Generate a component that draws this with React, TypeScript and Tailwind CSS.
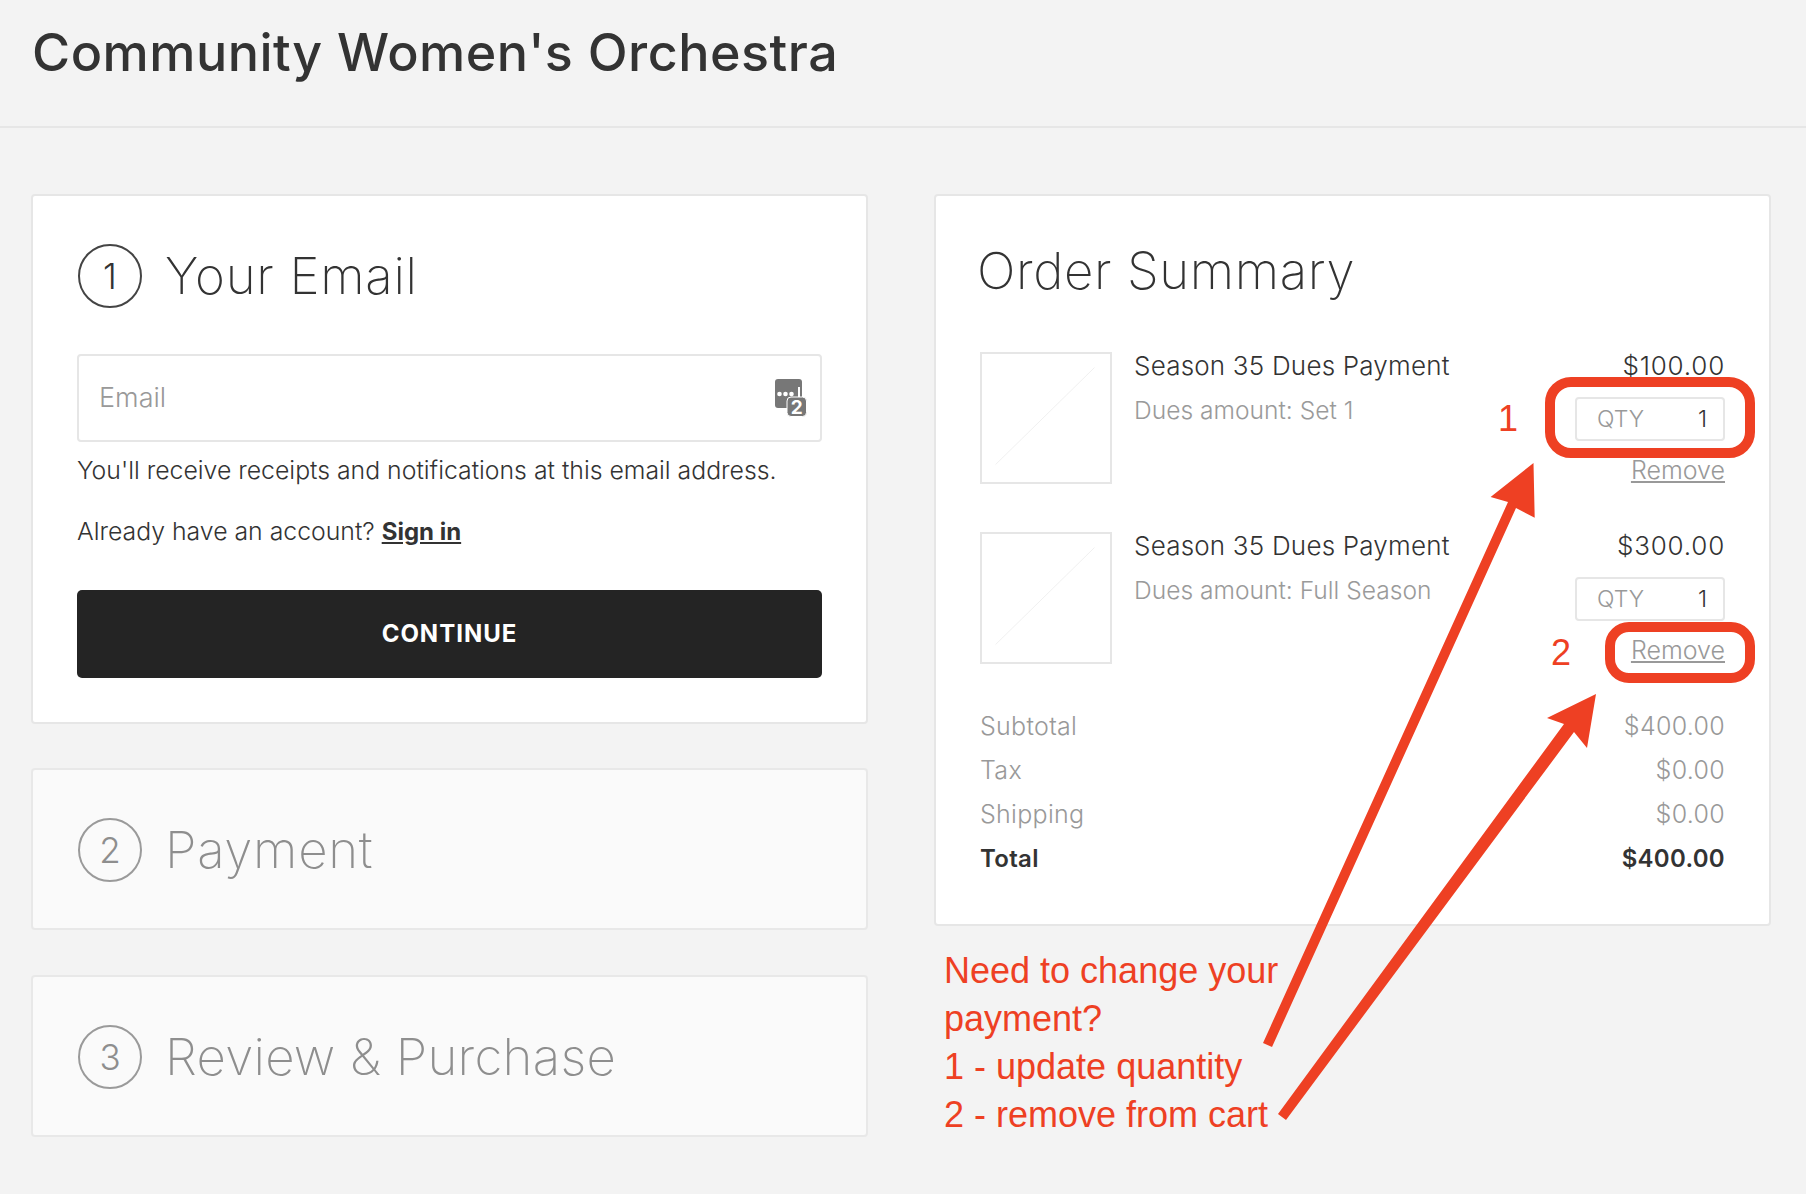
import React from 'react';

const font = "font-['Inter','Liberation_Sans',sans-serif]";

const StepHeading = ({ n, title, muted, tight }: { n: number; title: string; muted?: boolean; tight?: boolean }) => (
  <div className={`flex items-center gap-[23px] pl-px ${muted ? 'text-[#8e8e8e]' : 'text-[#333333]'}`}>
    <div
      className={`flex h-[64px] w-[64px] items-center justify-center rounded-full border-2 text-[35px] font-light ${
        muted ? 'border-[#9a9a9a]' : 'border-[#444444]'
      }`}
    >
      {n}
    </div>
    <h2 className={`text-[51px] font-extralight leading-[64px] ${tight ? 'tracking-[0.25px]' : 'tracking-[0.7px]'}`}>{title}</h2>
  </div>
);

const CollapsedStep = ({ n, title, tight }: { n: number; title: string; tight?: boolean }) => (
  <section className="h-[162px] rounded-[4px] border-2 border-[#e8e8e8] bg-[#fafafa] pl-[44px] pt-[48px]">
    <StepHeading n={n} title={title} muted tight={tight} />
  </section>
);

const KeychainIcon = () => (
  <svg width="32" height="38" viewBox="0 0 32 38" className="absolute right-[13px] top-[23px]">
    <rect x="0" y="0" width="27" height="29" rx="3" fill="#777777" />
    <circle cx="4.5" cy="15" r="2.3" fill="#ffffff" />
    <circle cx="10.5" cy="15" r="2.3" fill="#ffffff" />
    <circle cx="16.5" cy="15" r="2.3" fill="#ffffff" />
    <rect x="23" y="8" width="2" height="10" fill="#ffffff" />
    <rect x="12" y="18" width="19.5" height="19.5" rx="4" fill="#777777" stroke="#ffffff" strokeWidth="1" />
    <text x="21.8" y="34.5" textAnchor="middle" fontSize="19" fontWeight="700" fill="#ffffff">
      2
    </text>
  </svg>
);

const Thumb = () => (
  <svg width="132" height="132" viewBox="0 0 132 132" className="shrink-0 border-2 border-[#e6e6e6]">
    <line x1="14" y1="114" x2="116" y2="14" stroke="#efefef" strokeWidth="1" />
  </svg>
);

const CartItem = ({ name, sub, price }: { name: string; sub: string; price: string }) => (
  <div className="flex h-[132px]">
    <Thumb />
    <div className="ml-[22px] flex-1">
      <div className="text-[26px] font-light leading-[28px] tracking-[0.2px] text-[#333333]">{name}</div>
      <div className="mt-[16px] text-[24.6px] font-light leading-[28px] text-[#9a9a9a]">{sub}</div>
    </div>
    <div className="flex flex-col items-end">
      <div className="text-[26px] font-light leading-[28px] tracking-[0.8px] text-[#333333]">{price}</div>
      <div className="mt-[17px] flex h-[44px] w-[150px] shrink-0 items-center justify-between rounded-[4px] border-2 border-[#e6e6e6] pl-[20px] pr-[16px] text-[23px] font-light">
        <span className="text-[#999999]">QTY</span>
        <span className="text-[#333333]">1</span>
      </div>
      <a className="mt-[15px] text-[25px] font-light leading-[28px] text-[#999999] underline underline-offset-2">Remove</a>
    </div>
  </div>
);

const TotalRow = ({ label, value, strong }: { label: string; value: string; strong?: boolean }) => (
  <div
    className={`flex h-[44px] items-center justify-between tracking-[0.3px] ${
      strong ? 'text-[24px] font-semibold text-[#333333]' : 'text-[25px] font-light text-[#999999]'
    }`}
  >
    <span>{label}</span>
    <span>{value}</span>
  </div>
);

export default function App() {
  return (
    <div className={`relative min-h-[1194px] overflow-hidden bg-[#f3f3f3] ${font}`}>
      <header className="h-[128px] border-b-2 border-[#e6e6e6] pl-[32px] pt-[21px]">
        <h1 className="text-[52px] font-medium leading-[64px] tracking-[0.5px] text-[#333333]">Community Women's Orchestra</h1>
      </header>

      <main className="grid grid-cols-[837px_837px] gap-x-[66px] pl-[31px] pt-[66px]">
        <div className="flex flex-col">
          <section className="h-[530px] rounded-[4px] border-2 border-[#e6e6e6] bg-white px-[44px] pt-[48px]">
            <StepHeading n={1} title="Your Email" />
            <div className="relative mt-[46px] flex h-[88px] items-center rounded-[4px] border-2 border-[#e6e6e6] pl-[20px] text-[27px] font-light text-[#999999]">
              Email
              <KeychainIcon />
            </div>
            <p className="mt-[14px] text-[24.8px] font-light leading-[28px] text-[#333333]">
              You'll receive receipts and notifications at this email address.
            </p>
            <p className="mt-[33px] text-[24.8px] font-light leading-[28px] text-[#333333]">
              Already have an account? <a className="text-[24px] font-bold underline">Sign in</a>
            </p>
            <button className="mt-[44px] h-[88px] w-full rounded-[5px] bg-[#242424] text-[24px] font-bold tracking-[1px] text-white">
              CONTINUE
            </button>
          </section>
          <div className="mt-[44px]">
            <CollapsedStep n={2} title="Payment" />
          </div>
          <div className="mt-[45px]">
            <CollapsedStep n={3} title="Review & Purchase" tight />
          </div>
        </div>

        <div>
          <section className="h-[732px] rounded-[4px] border-2 border-[#e6e6e6] bg-white pl-[41px] pr-[44px] pt-[43px]">
            <h2 className="text-[51px] font-extralight leading-[64px] tracking-[0.6px] text-[#333333]">Order Summary</h2>
            <div className="mt-[49px] pl-[3px]">
              <div className="flex flex-col gap-[48px]">
                <CartItem name="Season 35 Dues Payment" sub="Dues amount: Set 1" price="$100.00" />
                <CartItem name="Season 35 Dues Payment" sub="Dues amount: Full Season" price="$300.00" />
              </div>
              <div className="mt-[41px]">
                <TotalRow label="Subtotal" value="$400.00" />
                <TotalRow label="Tax" value="$0.00" />
                <TotalRow label="Shipping" value="$0.00" />
                <TotalRow label="Total" value="$400.00" strong />
              </div>
            </div>
          </section>
          <p className="ml-[10px] mt-[21px] font-['Liberation_Sans',sans-serif] text-[36px] leading-[48px] text-[#ee4023]">
            Need to change your
            <br />
            payment?
            <br />1 - update quantity
            <br />2 - remove from cart
          </p>
        </div>
      </main>

      {/* red markup drawn over the page */}
      <svg width="1806" height="1194" viewBox="0 0 1806 1194" className="pointer-events-none absolute left-0 top-0">
        <rect x="1550" y="382" width="200" height="71" rx="21" fill="none" stroke="#ee4023" strokeWidth="10" />
        <rect x="1610" y="627" width="140" height="51" rx="19" fill="none" stroke="#ee4023" strokeWidth="10" />
        <polygon points="1533.5,463 1534.7,517.7 1516,508 1272,1047 1263,1043 1508,502 1490.6,497" fill="#ee4023" />
        <polygon points="1596,694 1587,748 1574,732 1286,1120 1278,1114 1564,724 1547,718" fill="#ee4023" />
      </svg>
      <span className="absolute left-[1498px] top-[398px] font-['Liberation_Sans',sans-serif] text-[36px] leading-[42px] text-[#ee4023]">1</span>
      <span className="absolute left-[1551px] top-[632px] font-['Liberation_Sans',sans-serif] text-[36px] leading-[42px] text-[#ee4023]">2</span>
    </div>
  );
}
